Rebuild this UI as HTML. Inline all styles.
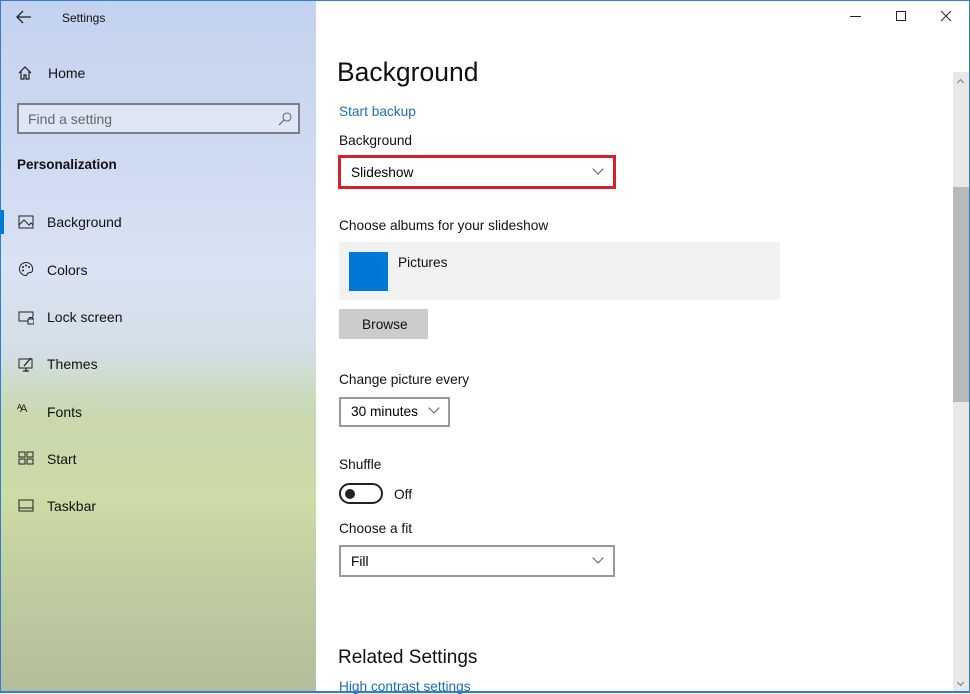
<!DOCTYPE html>
<html><head><meta charset="utf-8"><style>
*{margin:0;padding:0;box-sizing:border-box}
body{width:970px;height:693px;overflow:hidden;font-family:"Liberation Sans",sans-serif;color:#000;background:#fff;position:relative}
.a{position:absolute;white-space:nowrap}
#side{position:absolute;left:0;top:0;width:316px;height:693px;
background:linear-gradient(180deg,#c3d2ee 0%,#cdd9f0 20%,#d9e2f3 38%,#d3dfe8 50%,#c9d8ae 60%,#cddba6 72%,#bfcc9f 85%,#b3bd9c 100%)}
.nav{font-size:14px;color:#111}
.ic{position:absolute;left:18px;width:16px;height:16px}
.lbl{font-size:13.7px;color:#111}
.dd{position:absolute;border:2px solid #999;background:#fff;font-size:14px}
.chev{position:absolute;width:8px;height:8px;border-right:1px solid #555;border-bottom:1px solid #555;transform:rotate(45deg)}
</style></head><body>
<div id="side"></div>
<div class="a" style="left:0;top:0;width:1px;height:693px;background:#2f7fd0"></div>
<div class="a" style="left:969px;top:0;width:1px;height:693px;background:#2f7fd0"></div>
<div class="a" style="left:0;top:691px;width:970px;height:2px;background:#2f7fd0"></div>
<div class="a" style="left:0;top:0;width:970px;height:1px;background:#2f7fd0"></div>

<svg class="a" style="left:16px;top:10px" width="16" height="14"><path d="M15 7H2M7 1L1 7l6 6" fill="none" stroke="#222" stroke-width="1.3"/></svg>
<div class="a" style="left:62px;top:11px;font-size:12px;color:#111">Settings</div>

<svg class="a" style="left:17px;top:65px" width="16" height="16"><path d="M2 8L8 2l6 6M4 6v8h3v-4h2v4h3V6" fill="none" stroke="#222" stroke-width="1.2"/></svg>
<div class="a nav" style="left:48px;top:65px;font-size:14px">Home</div>

<div class="a" style="left:17px;top:103px;width:283px;height:31px;border:2px solid #7b808a;background:rgba(235,240,250,.6)"></div>
<div class="a" style="left:28px;top:111px;font-size:14px;color:#666">Find a setting</div>
<svg class="a" style="left:277px;top:111px" width="16" height="16"><circle cx="10" cy="6" r="4" fill="none" stroke="#666" stroke-width="1.1"/><path d="M7 9l-5 5" stroke="#666" stroke-width="1.2"/></svg>

<div class="a" style="left:17px;top:157px;font-size:13.5px;font-weight:bold;color:#111">Personalization</div>

<div class="a" style="left:0;top:210px;width:4px;height:24px;background:#0078d7"></div>
<svg class="ic" style="top:214px"><rect x="1" y="2" width="14" height="12" fill="none" stroke="#222"/><path d="M1 11l5-5 5 5 2-2 2 2" fill="none" stroke="#222"/></svg>
<div class="a nav" style="left:47px;top:214px">Background</div>
<svg class="ic" style="top:261px"><path d="M8 1.5a6.5 6.5 0 1 0 0 13c1.5 0 1-2 2-2.5 1.5-.5 4.5 0 4.5-3A6.5 6.5 0 0 0 8 1.5z" fill="none" stroke="#222"/><circle cx="5" cy="6" r="1" fill="#222"/><circle cx="8" cy="4.5" r="1" fill="#222"/><circle cx="11" cy="6" r="1" fill="#222"/><circle cx="5" cy="9.5" r="1" fill="#222"/></svg>
<div class="a nav" style="left:47px;top:262px">Colors</div>
<svg class="ic" style="top:309px"><path d="M10 12H1V3h14v5" fill="none" stroke="#222"/><rect x="10" y="10" width="6" height="5" fill="none" stroke="#222"/><path d="M11.5 10V8.5h3V10" fill="none" stroke="#222"/></svg>
<div class="a nav" style="left:47px;top:309px">Lock screen</div>
<svg class="ic" style="top:356px"><rect x="1" y="3" width="13" height="9" fill="none" stroke="#222"/><path d="M5 15h6M8 12v3M6 10l7-8" fill="none" stroke="#222" stroke-width="1.3"/></svg>
<div class="a nav" style="left:47px;top:356px">Themes</div>
<div class="a" style="left:17px;top:403px;font-size:11px;color:#222;letter-spacing:-2px">ᴬA</div>
<div class="a nav" style="left:47px;top:404px">Fonts</div>
<svg class="ic" style="top:450px"><rect x="1" y="2" width="6" height="5" fill="none" stroke="#222"/><rect x="9" y="2" width="6" height="5" fill="none" stroke="#222"/><rect x="1" y="9" width="6" height="5" fill="none" stroke="#222"/><rect x="9" y="9" width="6" height="5" fill="none" stroke="#222"/></svg>
<div class="a nav" style="left:47px;top:451px">Start</div>
<svg class="ic" style="top:498px"><rect x="1" y="2" width="14" height="11" fill="none" stroke="#222"/><path d="M1 10h14" stroke="#222"/></svg>
<div class="a nav" style="left:47px;top:498px">Taskbar</div>

<div class="a" style="left:850px;top:16px;width:11px;height:1px;background:#222"></div>
<div class="a" style="left:896px;top:11px;width:10px;height:10px;border:1px solid #222"></div>
<svg class="a" style="left:940px;top:10px" width="12" height="12"><path d="M1 1l10 10M11 1L1 11" stroke="#222"/></svg>

<div class="a" style="left:953px;top:72px;width:16px;height:619px;background:#e8e8e8"></div>
<div class="a" style="left:953px;top:187px;width:16px;height:215px;background:#b9b9b9"></div>
<div class="chev" style="left:958px;top:80px;transform:rotate(225deg);width:5px;height:5px;border-color:#777"></div>
<div class="chev" style="left:958px;top:680px;width:5px;height:5px;border-color:#777"></div>

<div class="a" style="left:337px;top:57px;font-size:26.5px;color:#111">Background</div>
<div class="a" style="left:339px;top:104px;font-size:13.7px;color:#1a6fb0">Start backup</div>
<div class="a lbl" style="left:339px;top:133px">Background</div>
<div class="a" style="left:338px;top:155px;width:278px;height:34px;border:3px solid #d8202c;background:#fff"></div>
<div class="a" style="left:351px;top:165px;font-size:13.7px">Slideshow</div>
<div class="chev" style="left:594px;top:165px"></div>
<div class="a lbl" style="left:339px;top:218px">Choose albums for your slideshow</div>
<div class="a" style="left:339px;top:242px;width:441px;height:58px;background:#f2f2f2"></div>
<div class="a" style="left:349px;top:252px;width:39px;height:39px;background:#0078d7"></div>
<div class="a lbl" style="left:398px;top:255px">Pictures</div>
<div class="a" style="left:339px;top:309px;width:89px;height:30px;background:#ccc"></div>
<div class="a lbl" style="left:362px;top:317px">Browse</div>
<div class="a lbl" style="left:339px;top:372px">Change picture every</div>
<div class="dd" style="left:339px;top:397px;width:111px;height:30px"></div>
<div class="a" style="left:351px;top:404px;font-size:13.7px">30 minutes</div>
<div class="chev" style="left:430px;top:404px"></div>
<div class="a lbl" style="left:339px;top:457px">Shuffle</div>
<div class="a" style="left:339px;top:483px;width:44px;height:21px;border:2px solid #222;border-radius:11px"></div>
<div class="a" style="left:345px;top:489px;width:10px;height:10px;border-radius:50%;background:#222"></div>
<div class="a lbl" style="left:394px;top:487px">Off</div>
<div class="a lbl" style="left:339px;top:521px">Choose a fit</div>
<div class="dd" style="left:339px;top:545px;width:276px;height:32px"></div>
<div class="a" style="left:351px;top:554px;font-size:13.7px">Fill</div>
<div class="chev" style="left:594px;top:554px"></div>
<div class="a" style="left:338px;top:647px;font-size:19px;color:#111">Related Settings</div>
<div class="a" style="left:339px;top:679px;font-size:13.7px;color:#1a6fb0">High contrast settings</div>
</body></html>
